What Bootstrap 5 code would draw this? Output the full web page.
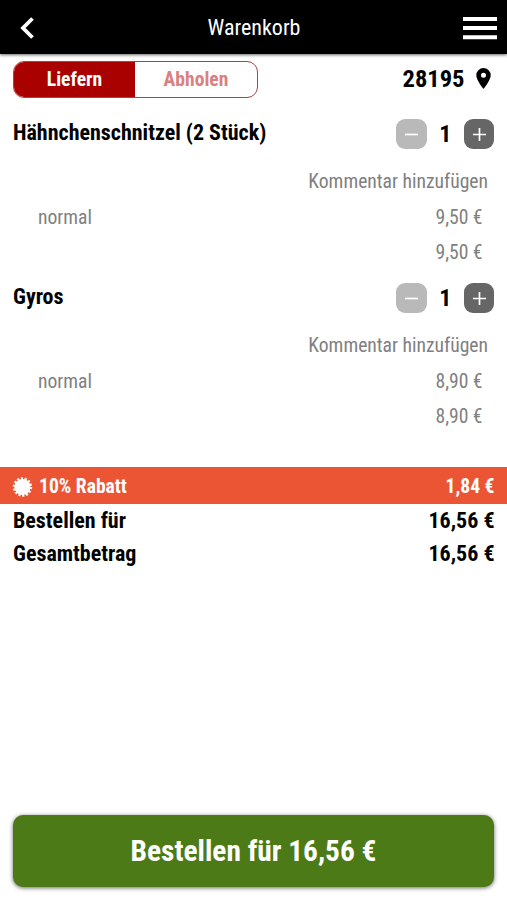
<!DOCTYPE html>
<html lang="de">
<head>
<meta charset="utf-8">
<meta name="viewport" content="width=device-width, initial-scale=1">
<title>Warenkorb</title>
<link href="https://cdn.jsdelivr.net/npm/bootstrap@5.3.0/dist/css/bootstrap.min.css" rel="stylesheet">
<style>
body{font-family:"Roboto Condensed",Roboto,sans-serif;font-stretch:75%;font-size:19.6px;line-height:1.2;color:#000;background:#fff}
.topbar{height:54px;background:#000;box-shadow:0 1px 3px rgba(0,0,0,.6);padding:0 10px 0 20px}
.topbar h1{font-size:22px;margin:0 9px 0 0;font-weight:400;line-height:28px;padding-top:2px}
.side{width:34px;padding-top:2px}
.gutter{padding-left:13px;padding-right:12.500px}
.mode-row{height:36px;margin:7px 0 20px}
.mode{width:245px;height:37px;border:1px solid #bb3c3c;border-radius:11px;overflow:hidden}
.mode .btn{font:inherit;font-weight:700;padding:2px 0 0;border:0;border-radius:0;color:#d98080}
.mode .btn:first-child{flex:0 0 121px}
.mode .btn.active{background:#a90000;color:#fff}
.zip{font-size:24.5px;font-weight:700;padding-right:4px;gap:11px}
.dish{height:164px;color:#808080}
.dish-head{height:34px;color:#000;margin-bottom:12px}
.dish-head h2{font-size:22px;font-weight:700;margin:0;padding-bottom:2px}
.stepper{width:98.500px}
.stepper .btn{width:30.500px;height:30.500px;padding:0;border:0;border-radius:9px;background:#666;opacity:1;line-height:1}
.stepper .btn:disabled{background:#b9b9b9}
.qty{font-size:24px;font-weight:700}
.line{height:36px;padding:2px 12px 0 25px}
.line:last-child{height:35px;padding-top:1px}
.note{padding-right:19px}
.discount{height:37px;margin-top:22px;background:#eb5533;color:#fff;font-weight:700;padding-top:2px}
.burst{margin:0 6px 0 -1px}
.sum{height:33px;font-size:22px;font-weight:700;padding-top:1px}
.order{height:72px;margin:0 13px 13px;padding:1px 0 0;border:0;border-radius:10px;background:#4c7a17!important;color:#fff!important;font-size:29.4px;font-weight:700;font-family:inherit;box-shadow:0 1px 4px rgba(0,0,0,.6)}
svg{display:block}
</style>
</head>
<body class="d-flex flex-column vh-100 overflow-hidden">
<header class="topbar d-flex align-items-center justify-content-between text-white flex-shrink-0">
  <div class="side"><svg width="16" height="24" viewBox="0 0 16 24"><path d="M12.500 2.500 3 12l9.500 9.500" fill="none" stroke="#fff" stroke-width="3.800"/></svg></div>
  <h1>Warenkorb</h1>
  <div class="side"><svg width="34" height="24" viewBox="0 0 34 24"><path d="M0 3h34M0 12h34M0 21.200h34" stroke="#fff" stroke-width="4"/></svg></div>
</header>

<main class="flex-grow-1">
  <div class="mode-row gutter d-flex align-items-center justify-content-between">
    <div class="mode d-flex">
      <button class="btn active" type="button">Liefern</button>
      <button class="btn flex-fill" type="button">Abholen</button>
    </div>
    <div class="zip d-flex align-items-center">
      <span>28195</span>
      <svg width="15" height="21" viewBox="0 0 15 21"><path d="M7.500 0A7.200 7.200 0 0 0 .3 7.300C.3 12.500 7.500 21 7.500 21s7.200-8.500 7.200-13.700A7.200 7.200 0 0 0 7.500 0zm0 4.800a2.500 2.500 0 1 1 0 5 2.500 2.500 0 0 1 0-5z" fill-rule="evenodd"/></svg>
    </div>
  </div>

  <section class="dish">
    <div class="dish-head gutter d-flex align-items-center justify-content-between">
      <h2>Hähnchenschnitzel (2 Stück)</h2>
      <div class="stepper d-flex align-items-center justify-content-between">
        <button class="btn d-flex align-items-center justify-content-center" type="button" disabled><svg width="13" height="13" viewBox="0 0 13 13"><path d="M0 6.500h13" stroke="#fff" stroke-width="1.700"/></svg></button>
        <span class="qty">1</span>
        <button class="btn d-flex align-items-center justify-content-center" type="button"><svg width="13" height="13" viewBox="0 0 13 13"><path d="M0 6.500h13M6.500 0v13" stroke="#fff" stroke-width="1.700"/></svg></button>
      </div>
    </div>
    <div class="line note d-flex align-items-center justify-content-end"><span>Kommentar hinzufügen</span></div>
    <div class="gutter">
      <div class="line d-flex align-items-center justify-content-between"><span>normal</span><span>9,50 €</span></div>
      <div class="line d-flex align-items-center justify-content-end"><span>9,50 €</span></div>
    </div>
  </section>

  <section class="dish">
    <div class="dish-head gutter d-flex align-items-center justify-content-between">
      <h2>Gyros</h2>
      <div class="stepper d-flex align-items-center justify-content-between">
        <button class="btn d-flex align-items-center justify-content-center" type="button" disabled><svg width="13" height="13" viewBox="0 0 13 13"><path d="M0 6.500h13" stroke="#fff" stroke-width="1.700"/></svg></button>
        <span class="qty">1</span>
        <button class="btn d-flex align-items-center justify-content-center" type="button"><svg width="13" height="13" viewBox="0 0 13 13"><path d="M0 6.500h13M6.500 0v13" stroke="#fff" stroke-width="1.700"/></svg></button>
      </div>
    </div>
    <div class="line note d-flex align-items-center justify-content-end"><span>Kommentar hinzufügen</span></div>
    <div class="gutter">
      <div class="line d-flex align-items-center justify-content-between"><span>normal</span><span>8,90 €</span></div>
      <div class="line d-flex align-items-center justify-content-end"><span>8,90 €</span></div>
    </div>
  </section>

  <div class="discount gutter d-flex align-items-center justify-content-between">
    <div class="d-flex align-items-center"><svg class="burst" width="21" height="20" viewBox="-10.500 -10 21 20"><circle r="8" fill="#fff"/><circle r="8.400" fill="none" stroke="#fff" stroke-width="2.600" stroke-dasharray="2.100 1.670"/></svg><span>10% Rabatt</span></div>
    <span>1,84 €</span>
  </div>
  <div class="sum gutter d-flex align-items-center justify-content-between"><span>Bestellen für</span><span>16,56 €</span></div>
  <div class="sum gutter d-flex align-items-center justify-content-between"><span>Gesamtbetrag</span><span>16,56 €</span></div>
</main>

<button class="order btn flex-shrink-0" type="button">Bestellen für 16,56 €</button>
<script src="https://cdn.jsdelivr.net/npm/bootstrap@5.3.0/dist/js/bootstrap.bundle.min.js"></script>
</body>
</html>
